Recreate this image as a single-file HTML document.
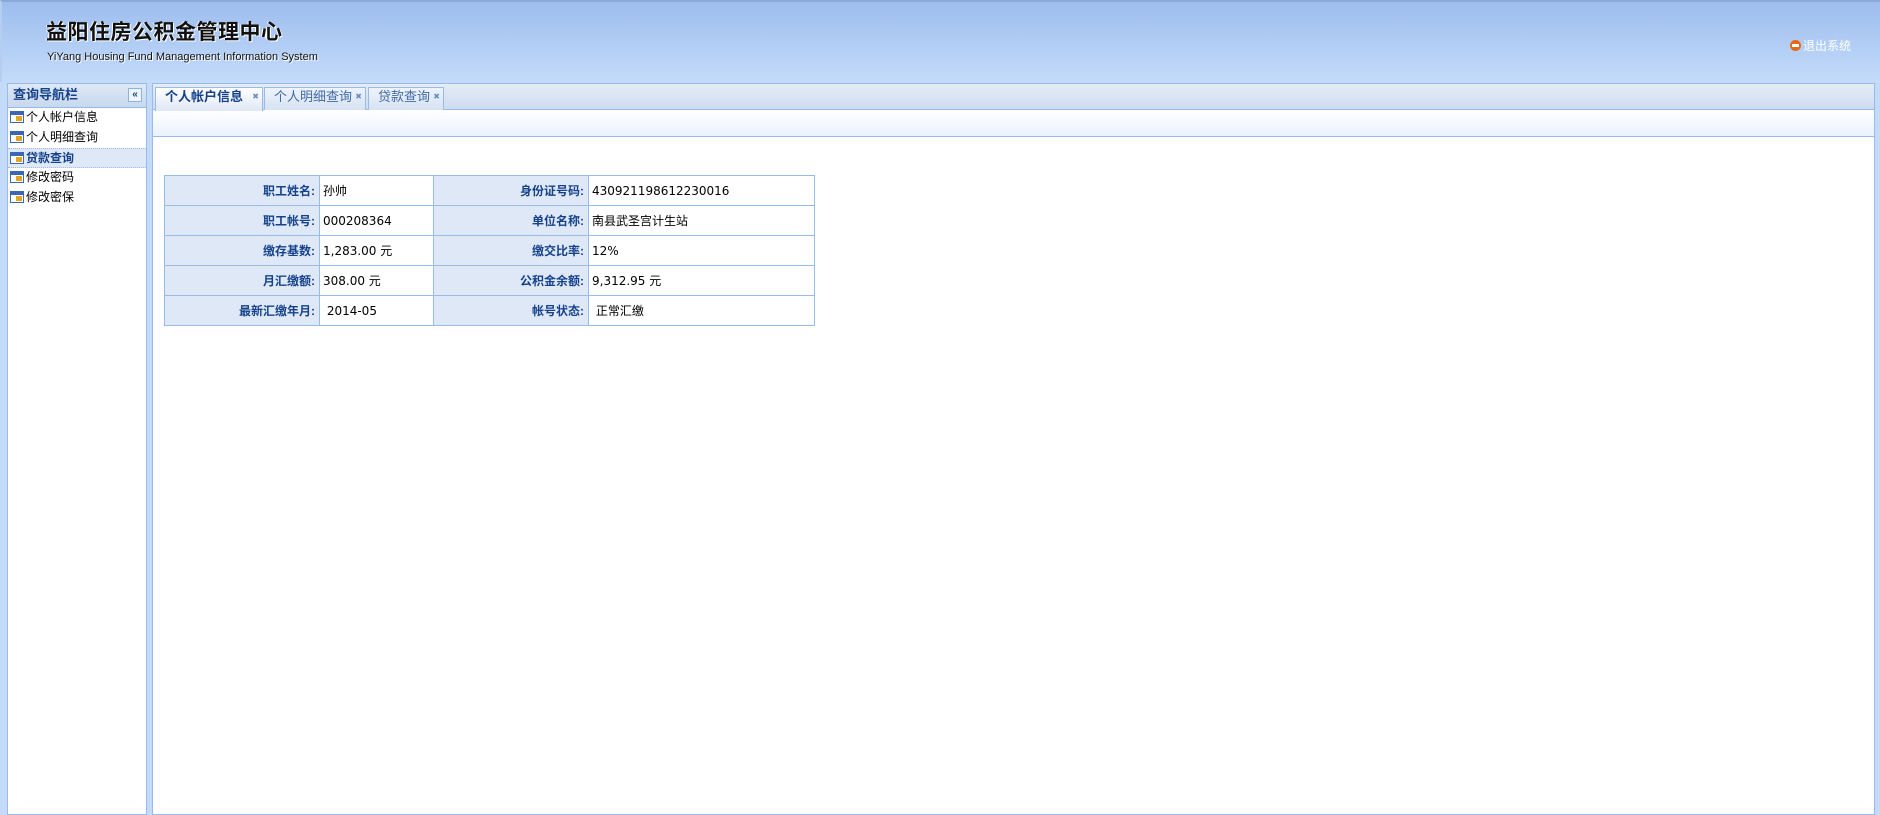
<!DOCTYPE html>
<html><head><meta charset="utf-8"><style>
*{margin:0;padding:0;box-sizing:border-box}
body{width:1880px;height:815px;overflow:hidden;background:#c3daf9;font-family:"Liberation Sans","Noto Sans CJK SC",sans-serif;font-size:12px;position:relative}
#hdr{position:absolute;left:0;top:0;width:1880px;height:82px;background:linear-gradient(#9dbdee,#c4dbfa);border-top:2px solid #8aa8d8;border-left:2px solid #b7cdf0}
#t1{position:absolute;left:44px;top:14px;font-size:21px;font-weight:bold;color:#111;letter-spacing:0.5px;text-shadow:1px 1px 0 #fff,-1px 0 0 #fff}
#t2{position:absolute;left:45px;top:49px;font-size:11px;color:#111;text-shadow:1px 1px 0 #fff}
#exit{position:absolute;left:1788px;top:35px;color:#fff;font-size:12px}
#exit i{display:inline-block;width:11px;height:11px;border-radius:50%;background:#e8681a;vertical-align:-1px;margin-right:2px;position:relative}
#exit i:after{content:"";position:absolute;left:2px;top:4px;width:7px;height:3px;background:#fff}
#left{position:absolute;left:7px;top:83px;width:140px;height:732px;background:#fff;border:1px solid #99bbe8}
#lh{height:24px;background:linear-gradient(#dfe8f6,#c8d8ee);border-bottom:1px solid #99bbe8;font-weight:bold;color:#15428b;padding:3px 0 0 5px;font-size:13px;line-height:16px;position:relative}
#lh b{position:absolute;right:4px;top:4px;width:14px;height:14px;border:1px solid #8db2e3;background:#f0f5fc;font-size:10px;line-height:12px;text-align:center;color:#15428b}
.it{height:20px;line-height:19px;padding-left:2px;color:#000;font-size:12px}
.it.s{background:#dfe8f6;font-weight:bold;color:#15428b;border-top:1px dotted #a3bae9;border-bottom:1px dotted #a3bae9}
.ic{display:inline-block;width:14px;height:12px;border:1px solid #3a66b5;background:linear-gradient(#3a66b5 0 3px,#fff 3px);vertical-align:-2px;margin-right:2px;position:relative}
.ic:after{content:"";position:absolute;right:1px;bottom:1px;width:6px;height:5px;background:#e3a521}
#main{position:absolute;left:152px;top:83px;width:1723px;height:732px;background:#fff;border:1px solid #99bbe8}
#tabs{height:26px;background:linear-gradient(#e4ecf7,#cedcf0);border-bottom:1px solid #99bbe8;position:relative}
.tab{position:absolute;top:3px;height:23px;border:1px solid #99bbe8;border-bottom:none;background:linear-gradient(#eef3fb,#d6e3f4);color:#416aa3;font-size:13px;line-height:16px;padding:1px 0 0 9px}
.tab.a{background:linear-gradient(#fff,#dfe8f6);color:#15428b;font-weight:bold;height:24px}
.tab sup{position:absolute;right:3px;top:1px;font-size:8px;color:#6a8fc5;font-weight:normal}
#tb{height:27px;background:linear-gradient(#fff,#eaf2fc);border-bottom:1px solid #99bbe8}
table{position:absolute;left:11px;top:91px;border-collapse:collapse;font-size:12px}
td{border:1px solid #99bbe8;height:30px;padding:0 3px;line-height:16px}
td.v{font-family:"DejaVu Sans","Noto Sans CJK SC",sans-serif;font-size:12px}
td.l{background:#dfe8f6;text-align:right;font-weight:bold;color:#15428b;padding-right:4px}
</style></head><body>
<div id="hdr"><div id="t1">益阳住房公积金管理中心</div><div id="t2">YiYang Housing Fund Management Information System</div><div id="exit"><i></i>退出系统</div></div>
<div id="left"><div id="lh">查询导航栏<b>«</b></div>
<div class="it"><span class="ic"></span>个人帐户信息</div>
<div class="it"><span class="ic"></span>个人明细查询</div>
<div class="it s"><span class="ic"></span>贷款查询</div>
<div class="it"><span class="ic"></span>修改密码</div>
<div class="it"><span class="ic"></span>修改密保</div></div>
<div id="main"><div id="tabs">
<div class="tab a" style="left:2px;width:108px">个人帐户信息<sup>✖</sup></div>
<div class="tab" style="left:111px;width:102px">个人明细查询<sup>✖</sup></div>
<div class="tab" style="left:215px;width:76px">贷款查询<sup>✖</sup></div></div>
<div id="tb"></div>
<table>
<tr><td class="l" style="width:155px">职工姓名:</td><td class="v" style="width:114px">孙帅</td><td class="l" style="width:155px">身份证号码:</td><td class="v" style="width:226px">430921198612230016</td></tr>
<tr><td class="l">职工帐号:</td><td class="v">000208364</td><td class="l">单位名称:</td><td class="v">南县武圣宫计生站</td></tr>
<tr><td class="l">缴存基数:</td><td class="v">1,283.00 元</td><td class="l">缴交比率:</td><td class="v">12%</td></tr>
<tr><td class="l">月汇缴额:</td><td class="v">308.00 元</td><td class="l">公积金余额:</td><td class="v">9,312.95 元</td></tr>
<tr><td class="l">最新汇缴年月:</td><td class="v">&nbsp;2014-05</td><td class="l">帐号状态:</td><td class="v">&nbsp;正常汇缴</td></tr>
</table></div>
</body></html>
